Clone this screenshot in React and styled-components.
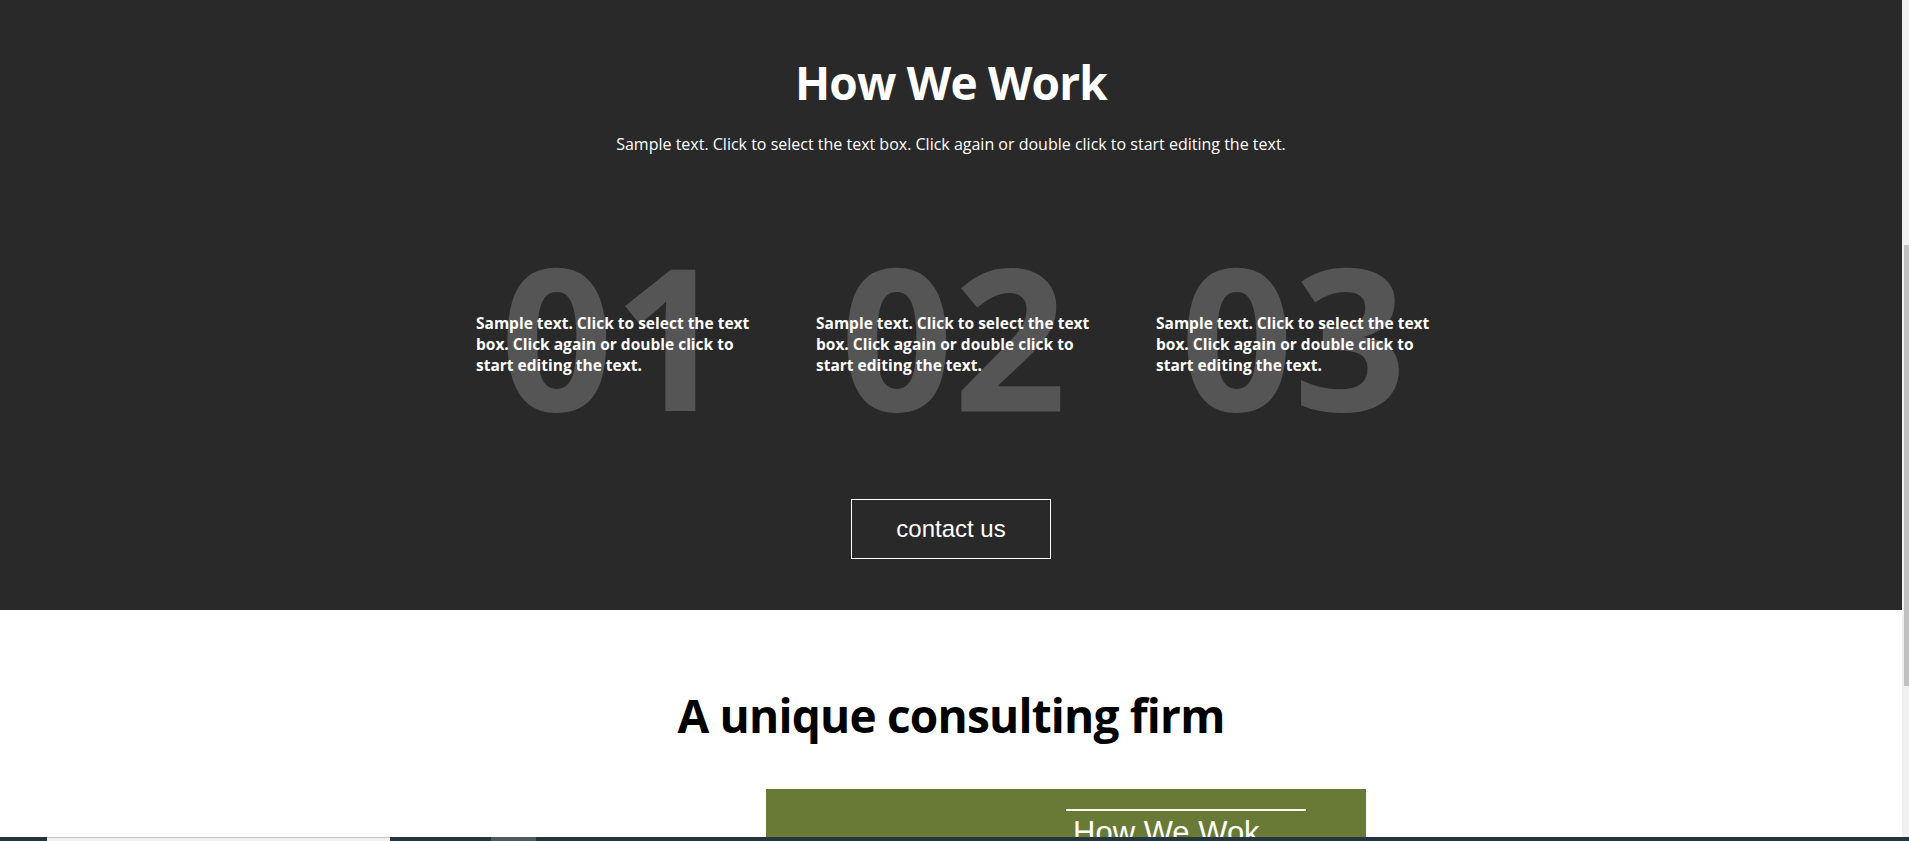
import React from 'react';
import styled, {createGlobalStyle} from 'styled-components';

const GlobalStyle = createGlobalStyle`
html, body {
  margin:0;
  padding:0;
  height:841px;
  overflow:hidden;
  background:#FFFFFF;
}
`
const Page = styled.div`
display:flex;
width:1909px;
height:841px;
`
const Main = styled.div`
flex:1;
min-width:0;
`
const ScrollTrack = styled.div`
width:7px;
background-color:#F0F0F0;
display:flex;
flex-direction:column;
align-items:flex-end;
padding-top:245px;
box-sizing:border-box;
`
const ScrollThumb = styled.div`
width:5px;
height:441px;
background-color:#C1C1C1;
`
const DarkSection = styled.section`
height:610px;
background-color:#292929;
display:flex;
flex-direction:column;
align-items:center;
padding-top:55px;
box-sizing:border-box;
`
const Title = styled.h2`
margin:0;
font-family:"Open Sans", "Noto Sans", sans-serif;
font-weight:700;
font-size:46px;
letter-spacing:-0.8px;
line-height:1.2;
color:${props => props.dark ? '#000000' : '#FFFFFF'};
`
const Subtitle = styled.p`
margin:23px 0 0;
font-family:"Open Sans", "Noto Sans", sans-serif;
font-size:16px;
line-height:22px;
color:#FFFFFF;
`
const Steps = styled.div`
display:grid;
grid-template-columns:repeat(3, 275px);
column-gap:65px;
margin:80px 0 0 5px;
`
const Step = styled.div`
display:grid;
`
const StepNumber = styled.div`
grid-area:1 / 1;
justify-self:center;
font-family:"Open Sans", "Noto Sans", sans-serif;
font-weight:700;
font-size:198px;
line-height:1;
color:#555555;
`
const StepText = styled.p`
grid-area:1 / 1;
margin:78px 0 0;
font-family:"Open Sans", "Noto Sans", sans-serif;
font-weight:700;
font-size:15.5px;
line-height:21px;
color:#FFFFFF;
`
const ContactButton = styled.button`
margin-top:66px;
width:200px;
height:60px;
background:transparent;
border:1px solid #FFFFFF;
color:#FFFFFF;
font-family:"Liberation Sans", Arial, sans-serif;
font-size:24px;
cursor:pointer;
`
const LightSection = styled.section`
display:flex;
flex-direction:column;
align-items:center;
padding-top:78px;
`
const CardRow = styled.div`
display:grid;
grid-template-columns:230px 600px;
margin-top:46px;
`
const Card = styled.div`
grid-column:2;
height:300px;
background-color:#687A35;
padding:20px 0 0 300px;
box-sizing:border-box;
`
const CardLine = styled.div`
width:240px;
height:2px;
background-color:#FFFFFF;
`
const CardTitle = styled.h3`
margin:3px 0 0 7px;
font-family:"Liberation Sans", Arial, sans-serif;
font-weight:400;
font-size:31px;
line-height:1.2;
color:#FFFFFF;
`
const Taskbar = styled.div`
position:fixed;
left:0;
bottom:0;
width:100%;
height:4px;
display:flex;
background-color:#233540;
`
const TaskSegment = styled.div`
width:${props => props.w}px;
background-color:${props => props.color || 'transparent'};
border-top:${props => props.light ? '1px solid #C4C4C4' : 'none'};
box-sizing:border-box;
`

const steps = ['01', '02', '03'];
const sample = 'Sample text. Click to select the text box. Click again or double click to start editing the text.';

const App = () => {
    return (
        <Page>
            <GlobalStyle />
            <Main>
                <DarkSection>
                    <Title>How We Work</Title>
                    <Subtitle>{sample}</Subtitle>
                    <Steps>
                        {steps.map(n => (
                            <Step key={n}>
                                <StepNumber>{n}</StepNumber>
                                <StepText>{sample}</StepText>
                            </Step>
                        ))}
                    </Steps>
                    <ContactButton>contact us</ContactButton>
                </DarkSection>
                <LightSection>
                    <Title dark>A unique consulting firm</Title>
                    <CardRow>
                        <Card>
                            <CardLine />
                            <CardTitle>How We Wok</CardTitle>
                        </Card>
                    </CardRow>
                </LightSection>
            </Main>
            <ScrollTrack>
                <ScrollThumb />
            </ScrollTrack>
            <Taskbar>
                <TaskSegment w={47} />
                <TaskSegment w={343} color="#F0F0F0" light />
                <TaskSegment w={101} />
                <TaskSegment w={45} color="#4B5A63" />
            </Taskbar>
        </Page>
    );
}

export default App;
